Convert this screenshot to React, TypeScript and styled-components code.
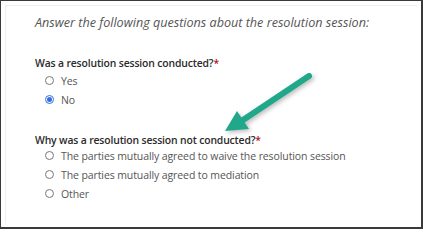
import React from 'react';
import styled, { createGlobalStyle } from 'styled-components';

const GlobalStyle = createGlobalStyle`
  html, body {
    margin: 0;
    padding: 0;
    background: #ffffff;
  }
  * {
    box-sizing: border-box;
  }
`;

const Frame = styled.div`
  position: relative;
  width: 423px;
  height: 229px;
  border: 1px solid #3a3a3a;
  border-right-width: 2px;
  border-bottom-width: 2px;
  padding: 4px;
  background: #fff;
  overflow: hidden;
  font-family: 'Open Sans', 'Noto Sans', sans-serif;
`;

const Panel = styled.div`
  height: 100%;
  border-top: 1px solid #efefef;
  border-left: 1px solid #efefef;
  padding: 8px 0 0 29px;
`;

const Intro = styled.p`
  margin: 0;
  font-size: 12.6px;
  line-height: 18px;
  font-style: italic;
  color: #555;
`;

const Question = styled.fieldset<{ $gap: number }>`
  border: 0;
  margin: 0;
  padding: 0;
  margin-top: ${(p) => p.$gap}px;
`;

const Legend = styled.legend`
  padding: 0;
  font-size: 10.4px;
  line-height: 16px;
  letter-spacing: -0.15px;
  font-weight: 600;
  color: #2b2b2b;
`;

const Required = styled.span`
  color: #b0141a;
`;

const Options = styled.div<{ $offset?: number }>`
  display: flex;
  flex-direction: column;
  padding-left: 10px;
  margin-top: ${(p) => p.$offset ?? 0}px;
`;

const Option = styled.label`
  display: flex;
  align-items: center;
  gap: 7px;
  height: 19px;
  font-size: 10.5px;
  letter-spacing: -0.1px;
  color: #555;
`;

const Dot = styled.span<{ $checked?: boolean }>`
  width: 9px;
  height: 9px;
  border-radius: 50%;
  border: 1px solid ${(p) => (p.$checked ? '#2f6fe0' : '#777')};
  background: #fff;
  display: flex;
  align-items: center;
  justify-content: center;
  flex-shrink: 0;

  &::after {
    content: '';
    width: 5px;
    height: 5px;
    border-radius: 50%;
    background: ${(p) => (p.$checked ? '#2f6fe0' : 'transparent')};
  }
`;

const Arrow = styled.svg`
  position: absolute;
  left: 0;
  top: 0;
  width: 423px;
  height: 229px;
  pointer-events: none;
  filter: drop-shadow(2px 2px 2px rgba(0, 0, 0, 0.25));
`;

const Radio: React.FC<{ label: string; checked?: boolean }> = ({ label, checked }) => (
  <Option>
    <Dot $checked={checked} />
    {label}
  </Option>
);

export default function App() {
  return (
    <>
      <GlobalStyle />
      <Frame>
        <Panel>
          <Intro>Answer the following questions about the resolution session:</Intro>
          <Question $gap={23}>
            <Legend>
              Was a resolution session conducted?<Required>*</Required>
            </Legend>
            <Options>
              <Radio label="Yes" />
              <Radio label="No" checked />
            </Options>
          </Question>
          <Question $gap={23}>
            <Legend>
              Why was a resolution session not conducted?<Required>*</Required>
            </Legend>
            <Options $offset={-2}>
              <Radio label="The parties mutually agreed to waive the resolution session" />
              <Radio label="The parties mutually agreed to mediation" />
              <Radio label="Other" />
            </Options>
          </Question>
        </Panel>
        <Arrow viewBox="0 0 423 229">
          <line x1="308" y1="75" x2="242" y2="119" stroke="#21a88a" strokeWidth="6" strokeLinecap="round" />
          <polygon points="236,110 248,128 224,130" fill="#21a88a" strokeLinejoin="round" />
        </Arrow>
      </Frame>
    </>
  );
}
